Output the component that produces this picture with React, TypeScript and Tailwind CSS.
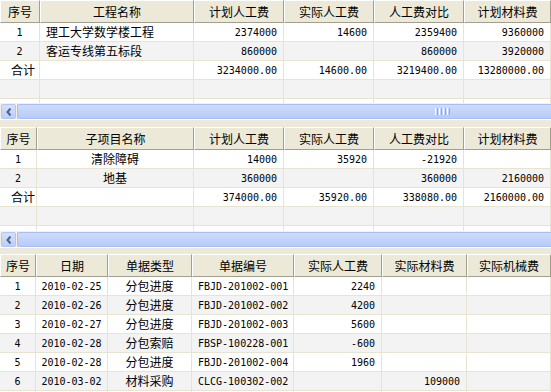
import React from 'react';

type Col = { label: string; w: string; align: 'c' | 'l' | 'r' | 'sum' };

const cjk = "font-['Noto_Sans_CJK_SC',sans-serif] text-[12px]";
const mono = "font-['DejaVu_Sans_Mono','Noto_Sans_CJK_SC',monospace] text-[10px]";

const alignCls = {
  c: 'justify-center',
  l: 'justify-start pl-[6px]',
  r: 'justify-end pr-[6px]',
  sum: 'justify-start pl-[11px]',
};

const projectCols: Col[] = [
  { label: '序号', w: 'w-[40px]', align: 'c' },
  { label: '工程名称', w: 'w-[154px]', align: 'l' },
  { label: '计划人工费', w: 'w-[90px]', align: 'r' },
  { label: '实际人工费', w: 'w-[90px]', align: 'r' },
  { label: '人工费对比', w: 'w-[90px]', align: 'r' },
  { label: '计划材料费', w: 'w-[87px]', align: 'r' },
];

const projectRows = [
  ['1', '理工大学数学楼工程', '2374000', '14600', '2359400', '9360000'],
  ['2', '客运专线第五标段', '860000', '', '860000', '3920000'],
  ['合计', '', '3234000.00', '14600.00', '3219400.00', '13280000.00'],
  ['', '', '', '', '', ''],
  ['', '', '', '', '', ''],
];

const subCols: Col[] = [
  { label: '序号', w: 'w-[37px]', align: 'c' },
  { label: '子项目名称', w: 'w-[157px]', align: 'c' },
  { label: '计划人工费', w: 'w-[90px]', align: 'r' },
  { label: '实际人工费', w: 'w-[90px]', align: 'r' },
  { label: '人工费对比', w: 'w-[90px]', align: 'r' },
  { label: '计划材料费', w: 'w-[87px]', align: 'r' },
];

const subRows = [
  ['1', '清除障碍', '14000', '35920', '-21920', ''],
  ['2', '地基', '360000', '', '360000', '2160000'],
  ['合计', '', '374000.00', '35920.00', '338080.00', '2160000.00'],
  ['', '', '', '', '', ''],
  ['', '', '', '', '', ''],
];

const billCols: Col[] = [
  { label: '序号', w: 'w-[36px]', align: 'c' },
  { label: '日期', w: 'w-[72px]', align: 'c' },
  { label: '单据类型', w: 'w-[84px]', align: 'c' },
  { label: '单据编号', w: 'w-[102px]', align: 'l' },
  { label: '实际人工费', w: 'w-[88px]', align: 'r' },
  { label: '实际材料费', w: 'w-[85px]', align: 'r' },
  { label: '实际机械费', w: 'w-[84px]', align: 'r' },
];

const billRows = [
  ['1', '2010-02-25', '分包进度', 'FBJD-201002-001', '2240', '', ''],
  ['2', '2010-02-26', '分包进度', 'FBJD-201002-002', '4200', '', ''],
  ['3', '2010-02-27', '分包进度', 'FBJD-201002-003', '5600', '', ''],
  ['4', '2010-02-28', '分包索赔', 'FBSP-100228-001', '-600', '', ''],
  ['5', '2010-02-28', '分包进度', 'FBJD-201002-004', '1960', '', ''],
  ['6', '2010-03-02', '材料采购', 'CLCG-100302-002', '', '109000', ''],
  ['', '', '', '', '', '', ''],
];

const isAscii = (s: string) => /^[\x00-\x7F]*$/.test(s);

const Grid = ({ cols, rows, bodyH }: { cols: Col[]; rows: string[][]; bodyH: string }) => (
  <div className="flex flex-col">
    <div className="flex h-[23px] bg-[#ECE9D8]">
      {cols.map((c) => (
        <div
          key={c.label}
          className={`${c.w} shrink-0 flex items-center justify-center border-t border-l border-t-white border-l-white border-r border-b border-r-[#A29F8E] border-b-[#A29F8E] text-black ${cjk}`}
        >
          {c.label}
        </div>
      ))}
    </div>
    <div className={`${bodyH} overflow-hidden bg-white`}>
      {rows.map((r, i) => (
        <div key={i} className={`flex h-[19px] ${i % 2 === 1 && r[0] !== '合计' ? 'bg-[#F3F3F3]' : 'bg-white'}`}>
          {r.map((v, j) => {
            const a = v === '合计' ? 'sum' : cols[j].align;
            return (
              <div
                key={j}
                className={`${cols[j].w} shrink-0 flex items-center whitespace-nowrap overflow-hidden border-r border-b border-[#E8E4D2] text-black ${alignCls[a]} ${isAscii(v) ? mono : cjk}`}
              >
                {v}
              </div>
            );
          })}
        </div>
      ))}
    </div>
  </div>
);

const ScrollBar = ({ grip }: { grip?: boolean }) => (
  <div className="flex h-[16px] bg-[#F3F1E8] pt-[1px]">
    <div className="ml-[1px] w-[15px] h-[15px] shrink-0 rounded-[2px] border border-[#B2C5F2] bg-gradient-to-b from-[#D5E1FD] to-[#BCCDF8] flex items-center justify-center">
      <svg width="6" height="8" viewBox="0 0 6 8">
        <polyline points="4.5,0.5 1.5,4 4.5,7.5" fill="none" stroke="#4D6185" strokeWidth="2" />
      </svg>
    </div>
    <div className="ml-[1px] flex-1 h-[15px] rounded-l-[2px] border border-r-0 border-[#A9BEF2] bg-gradient-to-b from-[#CFDCFC] to-[#B7CAF7] flex items-center pl-[417px]">
      {grip && (
        <div className="flex gap-[1px] h-[7px]">
          <div className="w-[1px] bg-white" />
          <div className="w-[1px] bg-[#8FA8E8]" />
          <div className="w-[1px] bg-white" />
          <div className="w-[1px] bg-[#8FA8E8]" />
          <div className="w-[1px] bg-white" />
          <div className="w-[1px] bg-[#8FA8E8]" />
          <div className="w-[1px] bg-white" />
          <div className="w-[1px] bg-[#8FA8E8]" />
        </div>
      )}
    </div>
  </div>
);

export default function App() {
  return (
    <div className="w-[551px] h-[392px] overflow-hidden bg-[#ECE9D8] flex flex-col">
      <Grid cols={projectCols} rows={projectRows} bodyH="h-[80px]" />
      <ScrollBar grip />
      <div className="h-[8px] shrink-0 border-t border-white bg-[#ECE9D8]" />
      <Grid cols={subCols} rows={subRows} bodyH="h-[81px]" />
      <ScrollBar />
      <div className="h-[7px] shrink-0 border-t border-white bg-[#ECE9D8]" />
      <Grid cols={billCols} rows={billRows} bodyH="h-[120px]" />
    </div>
  );
}
